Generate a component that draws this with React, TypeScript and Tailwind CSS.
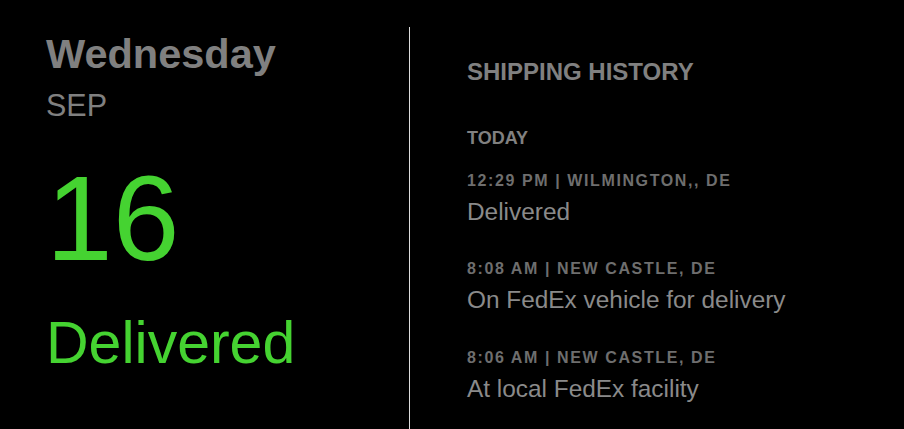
const events = [
  { label: '12:29 PM | WILMINGTON,, DE', text: 'Delivered' },
  { label: '8:08 AM | NEW CASTLE, DE', text: 'On FedEx vehicle for delivery' },
  { label: '8:06 AM | NEW CASTLE, DE', text: 'At local FedEx facility' },
];

export default function App() {
  return (
    <div
      className="flex h-[429px] w-full overflow-hidden bg-black"
      style={{ fontFamily: '"Liberation Sans", Arial, sans-serif' }}
    >
      {/* Delivery date summary */}
      <div className="w-[409px] shrink-0 pl-[46px]">
        <div className="mt-[33px] text-[41.5px] font-bold leading-none text-[#808080]">Wednesday</div>
        <div className="mt-[15px] text-[30.5px] leading-none text-[#808080]">SEP</div>
        <div className="mt-[38px] text-[120px] leading-none text-[#45d331]">16</div>
        <div className="mt-[36px] text-[59px] leading-none text-[#45d331]">Delivered</div>
      </div>

      {/* Shipping history */}
      <div className="mt-[27px] flex-1 border-l border-[#dcdcdc] pl-[57px] pt-[33px]">
        <div className="text-[24px] font-bold leading-none text-[#808080]">SHIPPING HISTORY</div>
        <div className="mt-[45px] text-[18px] font-bold leading-none text-[#808080]">TODAY</div>
        <div className="mt-[26px] flex flex-col gap-[37px]">
          {events.map((ev) => (
            <div key={ev.label} className="flex flex-col gap-[11px]">
              <div className="text-[16px] font-bold leading-none tracking-[1.6px] text-[#6e6e6e]">{ev.label}</div>
              <div className="text-[24.4px] leading-none text-[#8a8a8a]">{ev.text}</div>
            </div>
          ))}
        </div>
      </div>
    </div>
  );
}
